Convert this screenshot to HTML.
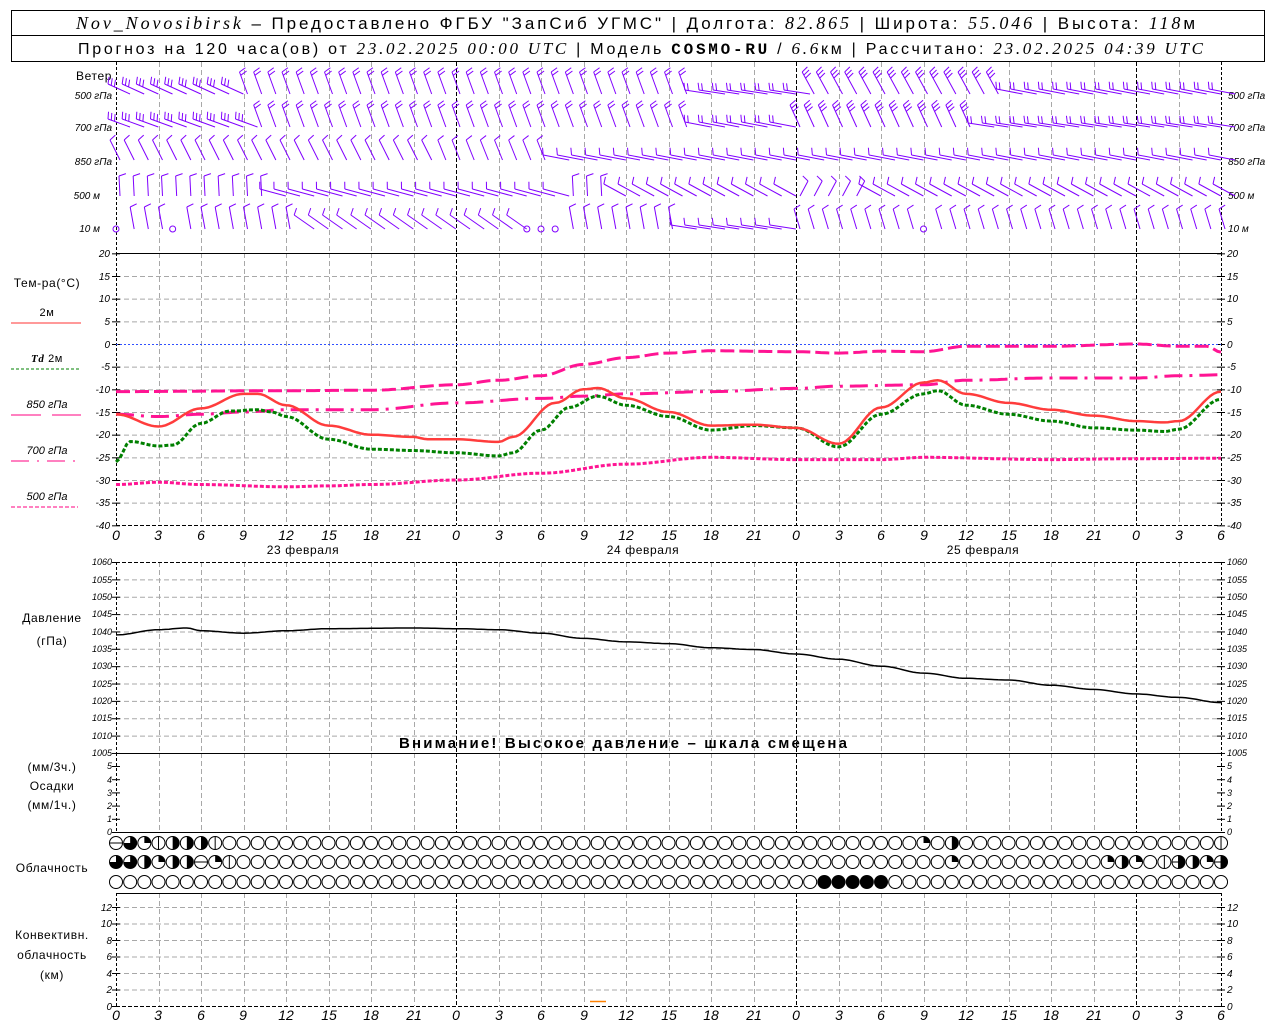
<!DOCTYPE html>
<html><head><meta charset="utf-8">
<style>
html,body{margin:0;padding:0;background:#fff;width:1280px;height:1024px;overflow:hidden}
svg{display:block}
text{font-family:"Liberation Sans",sans-serif;fill:#000}
.t{font-size:12px;letter-spacing:0.6px}
.it{font-style:italic;font-size:11px;font-family:"Liberation Serif",serif}
.ax{font-style:italic;font-size:10px;font-family:"Liberation Sans",sans-serif}
.hd{font-size:17px}
.hi{font-size:18px;font-style:italic;font-family:"Liberation Serif",serif}
</style></head><body>
<svg id="s" width="1280" height="1024" viewBox="0 0 1280 1024" xmlns="http://www.w3.org/2000/svg">
<rect x="0" y="0" width="1280" height="1024" fill="#fff"/>
<g id="grid"></g>
<!-- header -->
<rect x="11.5" y="10.5" width="1253" height="51" fill="none" stroke="#000"/>
<line x1="11" y1="35.5" x2="1264" y2="35.5" stroke="#000"/>
<text x="76" y="29" textLength="1119" lengthAdjust="spacing" class="hd"><tspan class="hi">Nov_Novosibirsk</tspan> – Предоставлено ФГБУ "ЗапСиб УГМС" | Долгота: <tspan class="hi">82.865</tspan> | Широта: <tspan class="hi">55.046</tspan> | Высота: <tspan class="hi">118</tspan>м</text>
<text x="78" y="54" textLength="1125" lengthAdjust="spacing" style="font-size:16px">Прогноз на 120 часа(ов) от <tspan class="hi" style="font-size:17px">23.02.2025 00:00 UTC</tspan>  | Модель <tspan style="font-family:'Liberation Mono',monospace;font-weight:bold;font-size:16px">COSMO-RU</tspan> / <tspan class="hi" style="font-size:17px">6.6</tspan>км | Рассчитано: <tspan class="hi" style="font-size:17px">23.02.2025 04:39 UTC</tspan></text>

<!-- left labels -->
<text x="112" y="80" text-anchor="end" class="t">Ветер</text>
<text x="112" y="99" text-anchor="end" class="ax">500 гПа</text>
<text x="112" y="131" text-anchor="end" class="ax">700 гПа</text>
<text x="112" y="165" text-anchor="end" class="ax">850 гПа</text>
<text x="100" y="199" text-anchor="end" class="ax">500 м</text>
<text x="100" y="232" text-anchor="end" class="ax">10 м</text>
<text x="1228" y="99" class="ax">500 гПа</text>
<text x="1228" y="131" class="ax">700 гПа</text>
<text x="1228" y="165" class="ax">850 гПа</text>
<text x="1228" y="199" class="ax">500 м</text>
<text x="1228" y="232" class="ax">10 м</text>

<text x="47" y="287" text-anchor="middle" class="t">Тем-ра(°C)</text>
<text x="47" y="316" text-anchor="middle" class="t" style="font-size:11px">2м</text>
<line x1="11" y1="323" x2="81" y2="323" stroke="#ff3333" stroke-width="1"/>
<text x="47" y="362" text-anchor="middle" class="t" style="font-size:11px"><tspan class="it" font-weight="bold">Td</tspan>  2м</text>
<line x1="11" y1="369" x2="79" y2="369" stroke="#008000" stroke-dasharray="3 2"/>
<text x="47" y="408" text-anchor="middle" class="ax" style="font-size:11px">850 гПа</text>
<line x1="11" y1="415" x2="41" y2="415" stroke="#ff0080"/><line x1="52" y1="415" x2="81" y2="415" stroke="#ff0080"/>
<text x="47" y="454" text-anchor="middle" class="ax" style="font-size:11px">700 гПа</text>
<line x1="11" y1="461" x2="78" y2="461" stroke="#ff0080" stroke-dasharray="18 8 2 8"/>
<text x="47" y="500" text-anchor="middle" class="ax" style="font-size:11px">500 гПа</text>
<line x1="11" y1="507" x2="78" y2="507" stroke="#ff0080" stroke-dasharray="4 2"/>

<text x="52" y="622" text-anchor="middle" class="t">Давление</text>
<text x="52" y="645" text-anchor="middle" class="t">(гПа)</text>
<text x="52" y="771" text-anchor="middle" class="t">(мм/3ч.)</text>
<text x="52" y="790" text-anchor="middle" class="t">Осадки</text>
<text x="52" y="809" text-anchor="middle" class="t">(мм/1ч.)</text>
<text x="52" y="872" text-anchor="middle" class="t">Облачность</text>
<text x="52" y="939" text-anchor="middle" class="t">Конвективн.</text>
<text x="52" y="959" text-anchor="middle" class="t">облачность</text>
<text x="52" y="979" text-anchor="middle" class="t">(км)</text>

<!-- temp ticks -->
<g class="ax" text-anchor="end">
<text x="110" y="257">20</text><text x="110" y="280">15</text><text x="110" y="302">10</text><text x="110" y="325">5</text><text x="110" y="348">0</text><text x="110" y="370">-5</text><text x="110" y="393">-10</text><text x="110" y="416">-15</text><text x="110" y="438">-20</text><text x="110" y="461">-25</text><text x="110" y="484">-30</text><text x="110" y="506">-35</text><text x="110" y="529">-40</text>
</g>
<g class="ax">
<text x="1227" y="257">20</text><text x="1227" y="280">15</text><text x="1227" y="302">10</text><text x="1227" y="325">5</text><text x="1227" y="348">0</text><text x="1227" y="370">-5</text><text x="1227" y="393">-10</text><text x="1227" y="416">-15</text><text x="1227" y="438">-20</text><text x="1227" y="461">-25</text><text x="1227" y="484">-30</text><text x="1227" y="506">-35</text><text x="1227" y="529">-40</text>
</g>
<!-- pressure ticks -->
<g class="ax" text-anchor="end" style="font-size:9px">
<text x="112" y="565">1060</text><text x="112" y="583">1055</text><text x="112" y="600">1050</text><text x="112" y="617">1045</text><text x="112" y="635">1040</text><text x="112" y="652">1035</text><text x="112" y="669">1030</text><text x="112" y="687">1025</text><text x="112" y="704">1020</text><text x="112" y="721">1015</text><text x="112" y="739">1010</text><text x="112" y="756">1005</text>
</g>
<g class="ax" style="font-size:9px">
<text x="1227" y="565">1060</text><text x="1227" y="583">1055</text><text x="1227" y="600">1050</text><text x="1227" y="617">1045</text><text x="1227" y="635">1040</text><text x="1227" y="652">1035</text><text x="1227" y="669">1030</text><text x="1227" y="687">1025</text><text x="1227" y="704">1020</text><text x="1227" y="721">1015</text><text x="1227" y="739">1010</text><text x="1227" y="756">1005</text>
</g>
<!-- precip ticks -->
<g class="ax" text-anchor="end" style="font-size:9px">
<text x="112" y="769">5</text><text x="112" y="783">4</text><text x="112" y="796">3</text><text x="112" y="809">2</text><text x="112" y="822">1</text><text x="112" y="835">0</text>
</g>
<g class="ax" style="font-size:9px">
<text x="1227" y="769">5</text><text x="1227" y="783">4</text><text x="1227" y="796">3</text><text x="1227" y="809">2</text><text x="1227" y="822">1</text><text x="1227" y="835">0</text>
</g>
<!-- conv ticks -->
<g class="ax" text-anchor="end">
<text x="112" y="911">12</text><text x="112" y="927">10</text><text x="112" y="944">8</text><text x="112" y="960">6</text><text x="112" y="977">4</text><text x="112" y="993">2</text><text x="112" y="1010">0</text>
</g>
<g class="ax">
<text x="1227" y="911">12</text><text x="1227" y="927">10</text><text x="1227" y="944">8</text><text x="1227" y="960">6</text><text x="1227" y="977">4</text><text x="1227" y="993">2</text><text x="1227" y="1010">0</text>
</g>
<!-- hour labels -->
<g class="it" text-anchor="middle" style="font-size:14px">
<text x="116" y="540">0</text><text x="158" y="540">3</text><text x="201" y="540">6</text><text x="243" y="540">9</text><text x="286" y="540">12</text><text x="329" y="540">15</text><text x="371" y="540">18</text><text x="414" y="540">21</text><text x="456" y="540">0</text><text x="499" y="540">3</text><text x="541" y="540">6</text><text x="584" y="540">9</text><text x="626" y="540">12</text><text x="669" y="540">15</text><text x="711" y="540">18</text><text x="754" y="540">21</text><text x="796" y="540">0</text><text x="839" y="540">3</text><text x="881" y="540">6</text><text x="924" y="540">9</text><text x="966" y="540">12</text><text x="1009" y="540">15</text><text x="1051" y="540">18</text><text x="1094" y="540">21</text><text x="1136" y="540">0</text><text x="1179" y="540">3</text><text x="1221" y="540">6</text>
</g>
<g class="it" text-anchor="middle" style="font-size:14px">
<text x="116" y="1020">0</text><text x="158" y="1020">3</text><text x="201" y="1020">6</text><text x="243" y="1020">9</text><text x="286" y="1020">12</text><text x="329" y="1020">15</text><text x="371" y="1020">18</text><text x="414" y="1020">21</text><text x="456" y="1020">0</text><text x="499" y="1020">3</text><text x="541" y="1020">6</text><text x="584" y="1020">9</text><text x="626" y="1020">12</text><text x="669" y="1020">15</text><text x="711" y="1020">18</text><text x="754" y="1020">21</text><text x="796" y="1020">0</text><text x="839" y="1020">3</text><text x="881" y="1020">6</text><text x="924" y="1020">9</text><text x="966" y="1020">12</text><text x="1009" y="1020">15</text><text x="1051" y="1020">18</text><text x="1094" y="1020">21</text><text x="1136" y="1020">0</text><text x="1179" y="1020">3</text><text x="1221" y="1020">6</text>
</g>
<text x="303" y="554" text-anchor="middle" class="t">23 февраля</text>
<text x="643" y="554" text-anchor="middle" class="t">24 февраля</text>
<text x="983" y="554" text-anchor="middle" class="t">25 февраля</text>
<text x="399" y="748" textLength="448" lengthAdjust="spacing" style="font-size:15px;font-weight:bold">Внимание! Высокое давление – шкала смещена</text>
<g id="dyn"></g>
</svg>
<script>
var NS="http://www.w3.org/2000/svg";
var G=document.getElementById("grid"),D=document.getElementById("dyn");
function el(p,n,a){var e=document.createElementNS(NS,n);for(var k in a)e.setAttribute(k,a[k]);p.appendChild(e);return e;}
function X(h){return 116+h*14.167;}
function ln(p,x1,y1,x2,y2,c,w,d){var a={x1:x1,y1:y1,x2:x2,y2:y2,stroke:c,"stroke-width":w||1};if(d)a["stroke-dasharray"]=d;return el(p,"line",a);}
var gc="#a8a8a8",gd="5 3";
var panels=[[62,253],[253,525],[562,753],[753,832],[893,1006]];
for(var v=15;v>=-35;v-=5){var y=344-v*4.533;if(v!=0)ln(G,116,y+.5,1221,y+.5,gc,1,gd);}
for(var p=1055;p>=1010;p-=5){var y=562+(1060-p)*3.472;ln(G,116,y+.5,1221,y+.5,gc,1,gd);}
for(var c=2;c<=12;c+=2){var y=1006-c*8.25;ln(G,116,y+.5,1221,y+.5,gc,1,gd);}
for(var h=0;h<=78;h+=3){var x=Math.round(X(h))+.5;var day=(h%24==0);
 panels.forEach(function(pp){ if(h==0||h==78) ln(G,x,pp[0],x,pp[1],"#000",1,"3 2"); else ln(G,x,pp[0],x,pp[1],day?"#000":gc,1,day?"4 2":gd);});}
function ticks(ys){ys.forEach(function(y){ln(G,112,y,120,y,"#000");ln(G,1217,y,1225,y,"#000");});}
var t=[];for(var v=20;v>=-40;v-=5)t.push(344-v*4.533+.5);ticks(t);
t=[];for(var p=1060;p>=1005;p-=5)t.push(562+(1060-p)*3.472+.5);ticks(t);
t=[];for(var i=0;i<=5;i++)t.push(832-i*13.2+.5);ticks(t);
t=[];for(var i=0;i<=12;i+=2)t.push(1006-i*8.25+.5);ticks(t);
ln(G,116,253.5,1221,253.5,"#000");ln(G,116,562.5,1221,562.5,"#000",1,"4 2");
ln(G,116,753.5,1221,753.5,"#000");ln(G,116,832.5,1221,832.5,"#000");ln(G,116,893.5,1221,893.5,"#000");ln(G,116,1006.5,1221,1006.5,"#000",1,"4 2");
ln(G,116,525.5,1221,525.5,"#000",1,"4 2");
ln(G,116,344.5,1221,344.5,"#3050ff",1,"2 2");
function interp(pts,h){for(var i=0;i<pts.length-1;i++){var a=pts[i],b=pts[i+1];if(h>=a[0]&&h<=b[0]){var t=(h-a[0])/(b[0]-a[0]);t=(1-Math.cos(Math.PI*t))/2;return a[1]+(b[1]-a[1])*t;}}return pts[pts.length-1][1];}
function curve(pts,fy,col,w,dash){var s="";for(var h=0;h<=78;h+=0.25){s+=X(h).toFixed(1)+","+fy(interp(pts,h)).toFixed(1)+" ";}
 var a={points:s,fill:"none",stroke:col,"stroke-width":w};if(dash)a["stroke-dasharray"]=dash;el(D,"polyline",a);}
function TY(v){return 344-v*4.533;}
curve([[0,-31],[3,-30.5],[6,-31],[12,-31.5],[15,-31.3],[18,-31],[24,-30],[30,-28.5],[36,-26.5],[42,-25],[48,-25.5],[54,-25.5],[57,-25],[66,-25.5],[72,-25.3],[78,-25.2]],TY,"#ff1493",3,"4 2");
curve([[0,-15.5],[3,-16],[6,-15.5],[9,-15],[12,-14.5],[18,-14.5],[24,-13],[30,-12],[33,-11.5],[36,-11],[42,-10.5],[48,-9.8],[51,-9.3],[57,-9],[60,-8],[66,-7.5],[72,-7.5],[75,-7],[78,-6.8]],TY,"#ff1493",3,"18 7 3 7");
curve([[0,-10.5],[12,-10.3],[18,-10.2],[24,-9],[27,-8],[30,-7],[33,-4.5],[36,-3],[39,-2],[42,-1.5],[48,-1.7],[51,-2],[54,-1.6],[57,-1.7],[60,-0.5],[66,-0.5],[72,0],[75,-0.5],[77,-0.5],[78,-1.8]],TY,"#ff1493",3,"14 5");
curve([[0,-26],[1,-21.5],[3,-22.5],[4,-22.3],[6,-17.5],[8,-14.8],[10,-14.5],[11,-15],[12,-16],[15,-21],[18,-23.2],[21,-23.5],[24,-24],[27,-24.7],[28,-24],[30,-19],[32,-14],[34,-11.5],[36,-13.5],[39,-16],[42,-19],[45,-18],[48,-18.5],[51,-22.7],[54,-15.5],[57,-11],[58,-10.3],[60,-13.5],[63,-15.5],[66,-17],[69,-18.5],[72,-19],[74,-19.3],[75,-18.8],[78,-12.2]],TY,"#008000",3,"4 2");
curve([[0,-15.5],[3,-18.2],[6,-14.2],[9,-11],[10,-11],[12,-13.5],[15,-18],[18,-20],[21,-20.5],[22,-21],[24,-21],[27,-21.6],[28,-20.5],[31,-13],[33,-10],[34,-9.7],[36,-12],[39,-15],[42,-18],[45,-17.8],[48,-18.5],[51,-22],[54,-14],[57,-8.5],[58,-8],[60,-11],[63,-13],[66,-14.5],[69,-15.8],[72,-17],[74,-17.3],[75,-17],[78,-10.5]],TY,"#ff3c3c",2.5);
curve([[0,1039],[3,1040.5],[5,1041],[6,1040.2],[9,1039.5],[12,1040.2],[15,1040.8],[21,1041],[24,1040.8],[27,1040.5],[30,1039.5],[33,1038],[36,1037],[39,1036.5],[42,1035.3],[45,1034.8],[48,1033.5],[51,1032],[54,1030],[57,1028],[60,1026.5],[63,1026],[66,1024.5],[69,1023.3],[72,1022],[75,1021],[78,1019.5]],function(p){return 562+(1060-p)*3.472;},"#000",1.5);
ln(D,590,1001.5,606,1001.5,"#ff8000",1.5);
var WC="#8000ff";
function barb(x,y,dx,dy,n){var g=D;ln(g,x,y,x+dx,y+dy,WC,1);
 var L=Math.sqrt(dx*dx+dy*dy),ux=dx/L,uy=dy/L;var px=uy,py=-ux; if(py>0){px=-px;py=-py;}
 for(var i=0;i<n;i++){var bx=x+dx-ux*i*3.5,by=y+dy-uy*i*3.5;ln(g,bx,by,bx+px*7+ux*2,by+py*7+uy*2,WC,1);}}
function calm(x,y){el(D,"circle",{cx:x,cy:y,r:3,fill:"none",stroke:WC,"stroke-width":1});}
var rows=[
 [94,[[0,8,-22,-10,3],[9,40,-8,-22,2],[41,48,-26,-4,2],[49,62,-12,-22,3],[63,78,-26,-5,2]]],
 [127,[[0,9,-22,-8,3],[10,40,-8,-22,2],[41,47,-26,-5,2],[48,60,-10,-22,3],[61,78,-26,-4,2]]],
 [160,[[0,22,-10,-20,1],[23,30,-8,-20,1],[31,78,-26,-5,1]]],
 [196,[[0,10,-1,-20,1],[11,31,-26,-7,1],[32,34,-1,-20,1],[35,47,-22,-12,1],[48,52,8,-15,1],[53,78,-22,-12,1]]],
 [229,[[0,12,-4,-22,1],[13,28,-20,-14,1],[29,31,0,0,0],[32,39,-4,-22,1],[40,47,-26,-4,1],[48,78,-6,-20,1]]]];
rows.forEach(function(r){for(var h=0;h<=78;h++){var s=null;r[1].forEach(function(q){if(h>=q[0]&&h<=q[1])s=q;});
 var x=X(h)+ (s&&s[2]<-15?14:4);
 if(!s||s[4]==0||(r[0]==229&&(h==0||h==4||h==57))){calm(X(h),r[0]);continue;}
 barb(x,r[0],s[2],s[3],s[4]);}});
var cl=[{0:"h",1:.75,2:.25,3:"v",4:.5,5:.5,6:.5,7:"v",57:.25,59:.5,78:"v"},
 {0:.75,1:.75,2:.5,3:.25,4:.5,5:.5,6:"h",7:.25,8:"v",59:.25,70:.25,71:.5,72:.25,74:"v",75:"h5",76:.5,77:.25,78:"h5"},
 {50:1,51:1,52:1,53:1,54:1}];
var cy=[843,862,882];
for(var r=0;r<3;r++)for(var h=0;h<=78;h++){var x=X(h),y=cy[r],R=6.5,f=cl[r][h];
 el(D,"circle",{cx:x,cy:y,r:R,fill:f===1?"#000":"#fff",stroke:"#000","stroke-width":1});
 if(f==="v"||f==="h5")ln(D,x,y-R,x,y+R,"#000");
 if(f==="h"||f==="h5")ln(D,x-R,y,x+R,y,"#000");
 if(f==="h5")f=.5;
 if(typeof f==="number"&&f<1){var a=f*2*Math.PI,ex=x+R*Math.sin(a),ey=y-R*Math.cos(a);
  el(D,"path",{d:"M"+x+","+y+" L"+x+","+(y-R)+" A"+R+","+R+" 0 "+(f>.5?1:0)+" 1 "+ex.toFixed(2)+","+ey.toFixed(2)+" Z",fill:"#000"});}}
</script>
</body></html>
